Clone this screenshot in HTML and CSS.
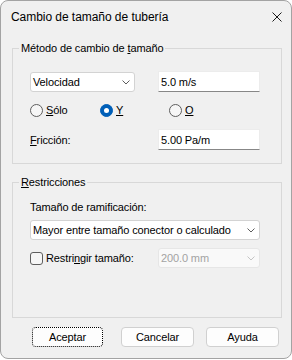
FILE: index.html
```html
<!DOCTYPE html>
<html lang="es">
<head>
  <meta charset="UTF-8">
  <meta name="viewport" content="width=device-width, initial-scale=1.0">
  <title>Cambio de tamaño de tubería</title>
  <link rel="stylesheet" href="styles.css">
</head>
<body>
  <div class="window">
    <div class="titlebar">
      <span class="title">Cambio de tamaño de tubería</span>
      <svg class="close" width="10" height="10" viewBox="0 0 10 10">
        <path d="M0.5 0.5L9.5 9.5M9.5 0.5L0.5 9.5" stroke="#1b1b1b" stroke-width="1"/>
      </svg>
    </div>

    <div class="content">
      <fieldset class="group group-method">
        <legend>Método de cambio de <u>t</u>amaño</legend>
        <div class="group-body">
          <div class="row row-first">
            <div class="combo combo-method">
              <span>Velocidad</span>
              <svg class="chevron" width="8" height="5" viewBox="0 0 8 5"><path d="M0.5 0.5L4 4L7.5 0.5" fill="none" stroke="#5c5c5c"/></svg>
            </div>
            <input class="edit edit-speed" type="text" value="5.0 m/s">
          </div>

          <div class="radios">
            <label class="radio radio-solo"><span class="dot"></span><span><u>S</u>ólo</span></label>
            <label class="radio radio-y"><span class="dot checked"></span><span><u>Y</u></span></label>
            <label class="radio"><span class="dot"></span><span><u>O</u></span></label>
          </div>

          <div class="row row-friction">
            <span class="label"><u>F</u>ricción:</span>
            <input class="edit" type="text" value="5.00 Pa/m">
          </div>
        </div>
      </fieldset>

      <fieldset class="group group-limits">
        <legend><u>R</u>estricciones</legend>
        <div class="group-body">
          <div class="caption">Tamaño de ramificación:</div>
          <div class="combo combo-branch">
            <span>Mayor entre tamaño conector o calculado</span>
            <svg class="chevron" width="8" height="5" viewBox="0 0 8 5"><path d="M0.5 0.5L4 4L7.5 0.5" fill="none" stroke="#5c5c5c"/></svg>
          </div>
          <div class="row row-restrict">
            <label class="check"><span class="box"></span><span>Restri<u>n</u>gir tamaño:</span></label>
            <div class="combo combo-disabled">
              <span>200.0 mm</span>
              <svg class="chevron" width="8" height="5" viewBox="0 0 8 5"><path d="M0.5 0.5L4 4L7.5 0.5" fill="none" stroke="#c4c4c4"/></svg>
            </div>
          </div>
        </div>
      </fieldset>

      <div class="buttons">
        <button class="btn btn-ok" type="button">Aceptar</button>
        <button class="btn btn-cancel" type="button">Cancelar</button>
        <button class="btn btn-help" type="button">Ayuda</button>
      </div>
    </div>
  </div>
</body>
</html>
```

FILE: styles.css
```css
body {
  margin: 0;
  background: #fff;
  font-family: "Liberation Sans", Arial, sans-serif;
  font-size: 11px;
  letter-spacing: -0.12px;
  color: #000;
}
.window {
  box-sizing: border-box;
  width: 292px;
  height: 359px;
  border: 1px solid #a3a3a3;
  border-radius: 8px;
  background: #f0f0f0;
  overflow: hidden;
}
.titlebar {
  display: flex;
  align-items: center;
  height: 31px;
  padding-left: 10px;
}
.title {
  font-size: 12px;
  letter-spacing: -0.05px;
  color: #000;
}
.close {
  margin-left: auto;
  margin-right: 9px;
}
.content {
  padding: 10px 9px 0 11px;
}
.group {
  margin: 0;
  padding: 0 0 13px 6px;
  border: 1px solid #d8d8d8;
  min-width: 0;
}
.group legend {
  padding: 0 2px;
  line-height: 13px;
}
.group-body {
  padding-left: 11px;
}
.row {
  display: flex;
}
.row-first {
  margin-top: 16px;
  align-items: flex-start;
}
.combo {
  box-sizing: border-box;
  display: flex;
  align-items: center;
  height: 20px;
  padding-left: 2px;
  border: 1px solid #d3d3d3;
  border-radius: 3px;
  background: #fff;
  line-height: 13px;
}
.combo .chevron {
  margin-left: auto;
  margin-right: 4px;
}
.combo-method {
  width: 105px;
  margin-top: 1px;
}
.edit {
  box-sizing: border-box;
  width: 102px;
  height: 21px;
  margin: 0;
  padding: 0 2px;
  border: 1px solid #ececec;
  border-bottom-color: #878787;
  background: #fff;
  font: inherit;
  letter-spacing: inherit;
  color: #000;
  outline: none;
}
.edit-speed {
  margin-left: 23px;
}
.radios {
  display: flex;
  align-items: center;
  height: 16px;
  margin-top: 10px;
}
.radio {
  display: flex;
  align-items: center;
  gap: 3px;
}
.radio-solo {
  width: 70px;
}
.radio-y {
  width: 69px;
}
.dot {
  box-sizing: border-box;
  display: grid;
  place-items: center;
  width: 13px;
  height: 13px;
  border: 1px solid #5e5e5e;
  border-radius: 50%;
  background: #f6f6f6;
}
.dot.checked {
  border-color: #005fb8;
  background: #005fb8;
}
.dot.checked::after {
  content: "";
  width: 5px;
  height: 5px;
  border-radius: 50%;
  background: #fff;
}
.row-friction {
  margin-top: 11px;
  align-items: center;
}
.label {
  width: 128px;
}
.group-limits {
  margin-top: 12px;
  padding-bottom: 49px;
}
.caption {
  margin-top: 12px;
  line-height: 13px;
}
.combo-branch {
  width: 230px;
  margin-top: 6px;
}
.row-restrict {
  margin-top: 8px;
  align-items: center;
}
.check {
  display: flex;
  align-items: center;
  gap: 3px;
  width: 128px;
}
.box {
  box-sizing: border-box;
  width: 13px;
  height: 13px;
  border: 1px solid #5e5e5e;
  border-radius: 3px;
  background: #f6f6f6;
}
.combo-disabled {
  width: 102px;
  border-color: #e6e6e6;
  background: #f9f9f9;
  color: #a3a3a3;
}
.buttons {
  display: flex;
  margin-top: 9px;
}
.btn {
  box-sizing: border-box;
  width: 73px;
  height: 20px;
  padding: 0;
  border: 1px solid #d0d0d0;
  border-radius: 4px;
  background: #fdfdfd;
  font: inherit;
  letter-spacing: inherit;
  color: #000;
}
.btn-ok {
  width: 71px;
  margin-left: 20px;
  border: 1px dotted #000;
}
.btn-cancel {
  margin-left: 18px;
}
.btn-help {
  margin-left: 12px;
}
```
